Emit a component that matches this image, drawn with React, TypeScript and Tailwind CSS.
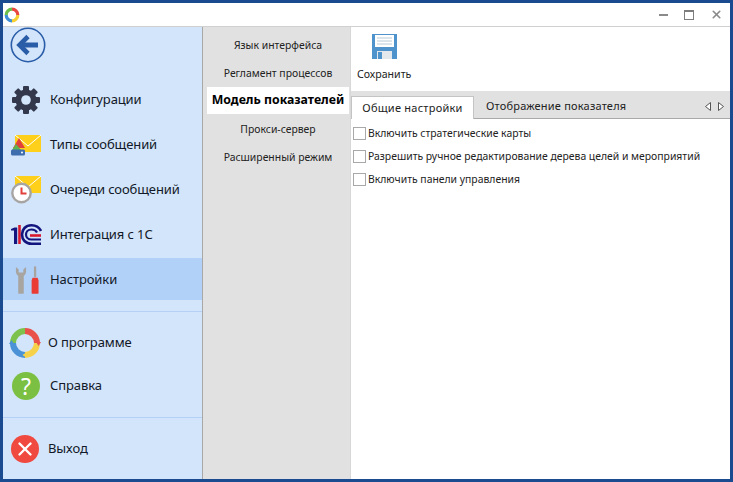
import { X } from "lucide-react";

const FONT = "font-['Noto_Sans','Open_Sans',sans-serif]";

function Logo() {
  return (
    <svg width="16" height="16" viewBox="0 0 16 16" fill="none" strokeWidth="3.2">
      <path d="M8 2.2A5.8 5.8 0 0 1 13.8 8" stroke="#e8483f" />
      <path d="M13.8 8A5.8 5.8 0 0 1 8 13.8" stroke="#f6d032" />
      <path d="M8 13.8A5.8 5.8 0 0 1 2.2 8" stroke="#3f8fd6" />
      <path d="M2.2 8A5.8 5.8 0 0 1 8 2.2" stroke="#6cbf4b" />
    </svg>
  );
}

function BackIcon() {
  return (
    <svg width="36" height="36" viewBox="0 0 36 36" fill="none">
      <circle cx="18" cy="18" r="16.7" stroke="#2a5da8" strokeWidth="1.6" />
      <path d="M18 9.500 9.500 18l8.500 8.500" stroke="#2a5da8" strokeWidth="4.600" />
      <path d="M11 18h17" stroke="#2a5da8" strokeWidth="5" />
    </svg>
  );
}

function GearIcon() {
  const teeth = [0, 45, 90, 135, 180, 225, 270, 315];
  return (
    <svg width="30" height="30" viewBox="0 0 30 30">
      {teeth.map((a) => (
        <rect key={a} x="12" y="1" width="6" height="6" rx="1" fill="#33384d" transform={`rotate(${a} 15 15)`} />
      ))}
      <circle cx="15" cy="15" r="10.500" fill="#33384d" />
      <circle cx="15" cy="15" r="4.800" fill="#d3e5fb" />
    </svg>
  );
}

function TypesIcon() {
  return (
    <svg width="32" height="22" viewBox="0 0 32 22">
      <path d="M4 1h26v17H4z" fill="#fed01b" />
      <path d="M4 1l13 11L30 1" fill="none" stroke="#fff" strokeWidth="1" />
      <path d="M2 14 8 4l6 10z" fill="#e2403a" />
      <path d="M1 16l4-6 5 6z" fill="#5fb350" />
      <rect x="0" y="15.500" width="14" height="6" rx="1.500" fill="#3f6eaf" />
      <circle cx="11" cy="18.500" r="1" fill="#fff" />
    </svg>
  );
}

function QueueIcon() {
  return (
    <svg width="32" height="29" viewBox="0 0 32 29">
      <path d="M4 1h26v17H4z" fill="#fed01b" />
      <path d="M4 1l13 11L30 1" fill="none" stroke="#fff" strokeWidth="1" />
      <circle cx="10.500" cy="18" r="9.200" fill="#fff" stroke="#a7a5a3" strokeWidth="2.400" />
      <path d="M10.500 12.500V18.500h5" fill="none" stroke="#e2403a" strokeWidth="2" />
    </svg>
  );
}

function OneCIcon() {
  return (
    <svg width="31" height="21" viewBox="0 0 31 21" fill="none">
      <path d="M0 6.500h3V20h3.200V3.500H3.500L0 5z" fill="#14147e" />
      <path d="M8.500 1v19" stroke="#d8182c" strokeWidth="2.600" />
      <path d="M30 7C28 3 25 1.300 20.500 1.300 14.500 1.300 11 5.500 11 10.500S14.500 19.700 20.500 19.700H30" stroke="#14147e" strokeWidth="2.600" />
      <path d="M26 8.500C25 6.500 23 5.500 20.500 5.500 17 5.500 15 8 15 10.500S17 15.500 20.500 15.500H30" stroke="#14147e" strokeWidth="2.200" />
      <path d="M19 11.500h11" stroke="#d8182c" strokeWidth="2.600" />
    </svg>
  );
}

function ToolsIcon() {
  return (
    <svg width="24" height="28" viewBox="0 0 26 30">
      <path d="M1 1v5c0 2 1.500 4 2.500 4.500V29c0 .6.4 1 1 1h4c.6 0 1-.4 1-1V10.500c1-.5 2.500-2.500 2.500-4.500V1L9 3.500V7H4V3.500z" fill="#a8a4a0" />
      <rect x="20.500" y="0" width="2.500" height="12" rx="1" fill="#a8a4a0" />
      <path d="M19 12.500h5.500l1 3V29c0 .6-.4 1-1 1H19c-.6 0-1-.4-1-1V15.500z" fill="#ea3b35" />
    </svg>
  );
}

function AboutIcon() {
  return (
    <svg width="32" height="32" viewBox="0 0 32 32" fill="none" strokeWidth="6">
      <path d="M16 4a12 12 0 0 1 12 12" stroke="#e9524a" />
      <path d="M28 16a12 12 0 0 1-12 12" stroke="#f6d24a" />
      <path d="M16 28A12 12 0 0 1 4 16" stroke="#4b92d6" />
      <path d="M4 16A12 12 0 0 1 16 4" stroke="#7cc24c" />
      <path d="M27 15h5l-2.500 4z" fill="#e9524a" />
      <path d="M17 25.500v5l-3.500-2.500z" fill="#f6d24a" />
      <path d="M5 17H0l2.500-4z" fill="#4b92d6" />
    </svg>
  );
}

function HelpIcon() {
  return (
    <div className="flex h-7 w-7 items-center justify-center rounded-full bg-[#7bc043] text-[23px] leading-none text-white">
      ?
    </div>
  );
}

function ExitIcon() {
  return (
    <div className="flex h-7 w-7 items-center justify-center rounded-full bg-[#f0493f] text-white">
      <X size={22} strokeWidth={2.6} />
    </div>
  );
}

function NavRow({
  icon,
  label,
  active,
  textX = "w-[47px]",
  iconPad = "pl-[8px]",
  height = "h-[45px]",
}: {
  icon: React.ReactNode;
  label: string;
  active?: boolean;
  textX?: string;
  iconPad?: string;
  height?: string;
}) {
  return (
    <div className={`flex ${height} shrink-0 items-center ${active ? "bg-[#b1d1f9]" : ""}`}>
      <div className={`flex ${textX} shrink-0 items-center ${iconPad}`}>{icon}</div>
      <span className="text-[13px] tracking-[-0.1px] text-[#111827]">{label}</span>
    </div>
  );
}

function Checkbox({ label }: { label: string }) {
  return (
    <label className="flex h-[23px] items-center gap-[2px] pl-[2px]">
      <span className="h-[13px] w-[13px] shrink-0 border border-[#a9a9a9] bg-white" />
      <span className="whitespace-nowrap text-[10.4px] text-[#222]">{label}</span>
    </label>
  );
}

export default function App() {
  const sections = ["Язык интерфейса", "Регламент процессов", "Модель показателей", "Прокси-сервер", "Расширенный режим"];

  return (
    <div className={`flex h-[482px] w-[733px] flex-col overflow-hidden border-[3px] border-[#1a4a90] bg-white ${FONT}`}>
      {/* title bar */}
      <div className="flex h-[24px] shrink-0 items-center justify-between border-b border-[#d0d0d0]">
        <div className="pl-[1px]">
          <Logo />
        </div>
        <div className="flex items-center gap-[16px] pr-[7px]">
          <span className="h-[2px] w-[9px] bg-[#8a8a8a]" />
          <span className="h-[10px] w-[10px] border border-t-2 border-[#7d7d7d]" />
          <X size={13} strokeWidth={3} className="text-[#8a8a8a]" />
        </div>
      </div>

      <div className="flex min-h-0 flex-1">
        {/* main menu */}
        <aside className="flex w-[200px] shrink-0 flex-col border-r border-[#a8a8a8] bg-[#d3e5fb]">
          <div className="h-[50px] shrink-0 pl-[7px]">
            <BackIcon />
          </div>
          <NavRow icon={<GearIcon />} label="Конфигурации" />
          <NavRow icon={<TypesIcon />} label="Типы сообщений" />
          <NavRow icon={<QueueIcon />} label="Очереди сообщений" />
          <NavRow icon={<OneCIcon />} label="Интеграция с 1С" />
          <div className="mt-px">
            <NavRow icon={<ToolsIcon />} label="Настройки" active iconPad="pl-[12px]" height="h-[42px] pt-[2px]" />
          </div>
          <div className="mt-[11px] h-px shrink-0 bg-[#b4d0f4]" />
          <div className="mt-[9px]">
            <NavRow icon={<AboutIcon />} label="О программе" textX="w-[45px]" iconPad="pl-[6px]" height="h-[44px]" />
            <NavRow icon={<HelpIcon />} label="Справка" iconPad="pl-[9px]" height="h-[42px]" />
          </div>
          <div className="mt-[10px] h-px shrink-0 bg-[#b4d0f4]" />
          <div className="mt-[9px]">
            <NavRow icon={<ExitIcon />} label="Выход" textX="w-[45px]" iconPad="pl-[8px]" height="h-[44px]" />
          </div>
        </aside>

        {/* settings sections */}
        <nav className="flex w-[148px] shrink-0 flex-col items-center gap-[2px] border-r border-[#d8d8d8] bg-[#e1e1e1] pl-[4px] pr-px pt-[6px]">
          {sections.map((s) => {
            const active = s === "Модель показателей";
            return (
              <div
                key={s}
                className={
                  active
                    ? "-mt-[2px] mb-px flex h-[27px] w-full items-center justify-center whitespace-nowrap bg-white text-[12.3px] font-bold text-black"
                    : "flex h-[26px] w-full items-center justify-center whitespace-nowrap text-[10.4px] text-[#222]"
                }
              >
                {s}
              </div>
            );
          })}
        </nav>

        {/* content */}
        <main className="flex min-w-0 flex-1 flex-col bg-white">
          <div className="flex h-[64px] shrink-0 flex-col items-start pl-[6px] pt-[7px]">
            <svg width="25" height="25" viewBox="0 0 25 25" className="ml-[15px]">
              <path d="M0 0h25v25H0z" fill="#4f93cd" />
              <path d="M3 1h19v12H3z" fill="#fff" />
              <path d="M5 4h15M5 7h15M5 10h15" stroke="#b9c9d8" strokeWidth="1" />
              <path d="M5 17h15v8H5z" fill="#e3e8ec" />
              <path d="M6 18h4v7H6z" fill="#4f93cd" />
            </svg>
            <span className="mt-[8px] text-[10.6px] text-[#222]">Сохранить</span>
          </div>

          <div className="flex h-[28px] shrink-0 items-end border-b border-[#a9a9a9] bg-[#e1e1e1]">
            <div className="-mb-px flex h-[23px] w-[123px] items-center justify-center border border-b-0 border-[#c4c4c4] bg-white text-[11px] tracking-[0.25px] text-[#222]">
              Общие настройки
            </div>
            <div className="flex h-[23px] flex-1 items-center pl-[12px] text-[11px] tracking-[0.2px] text-[#222]">
              Отображение показателя
            </div>
            <div className="flex h-[23px] items-center gap-[7px] pr-[6px]">
              <svg width="6" height="9" viewBox="0 0 6 9" fill="#fff" stroke="#555">
                <path d="M5.500.5v8L.5 4.500z" />
              </svg>
              <svg width="6" height="9" viewBox="0 0 6 9" fill="#fff" stroke="#555">
                <path d="M.5.5v8l5-4z" />
              </svg>
            </div>
          </div>

          <div className="flex flex-col pt-[3px]">
            <Checkbox label="Включить стратегические карты" />
            <Checkbox label="Разрешить ручное редактирование дерева целей и мероприятий" />
            <Checkbox label="Включить панели управления" />
          </div>
        </main>
      </div>
    </div>
  );
}
